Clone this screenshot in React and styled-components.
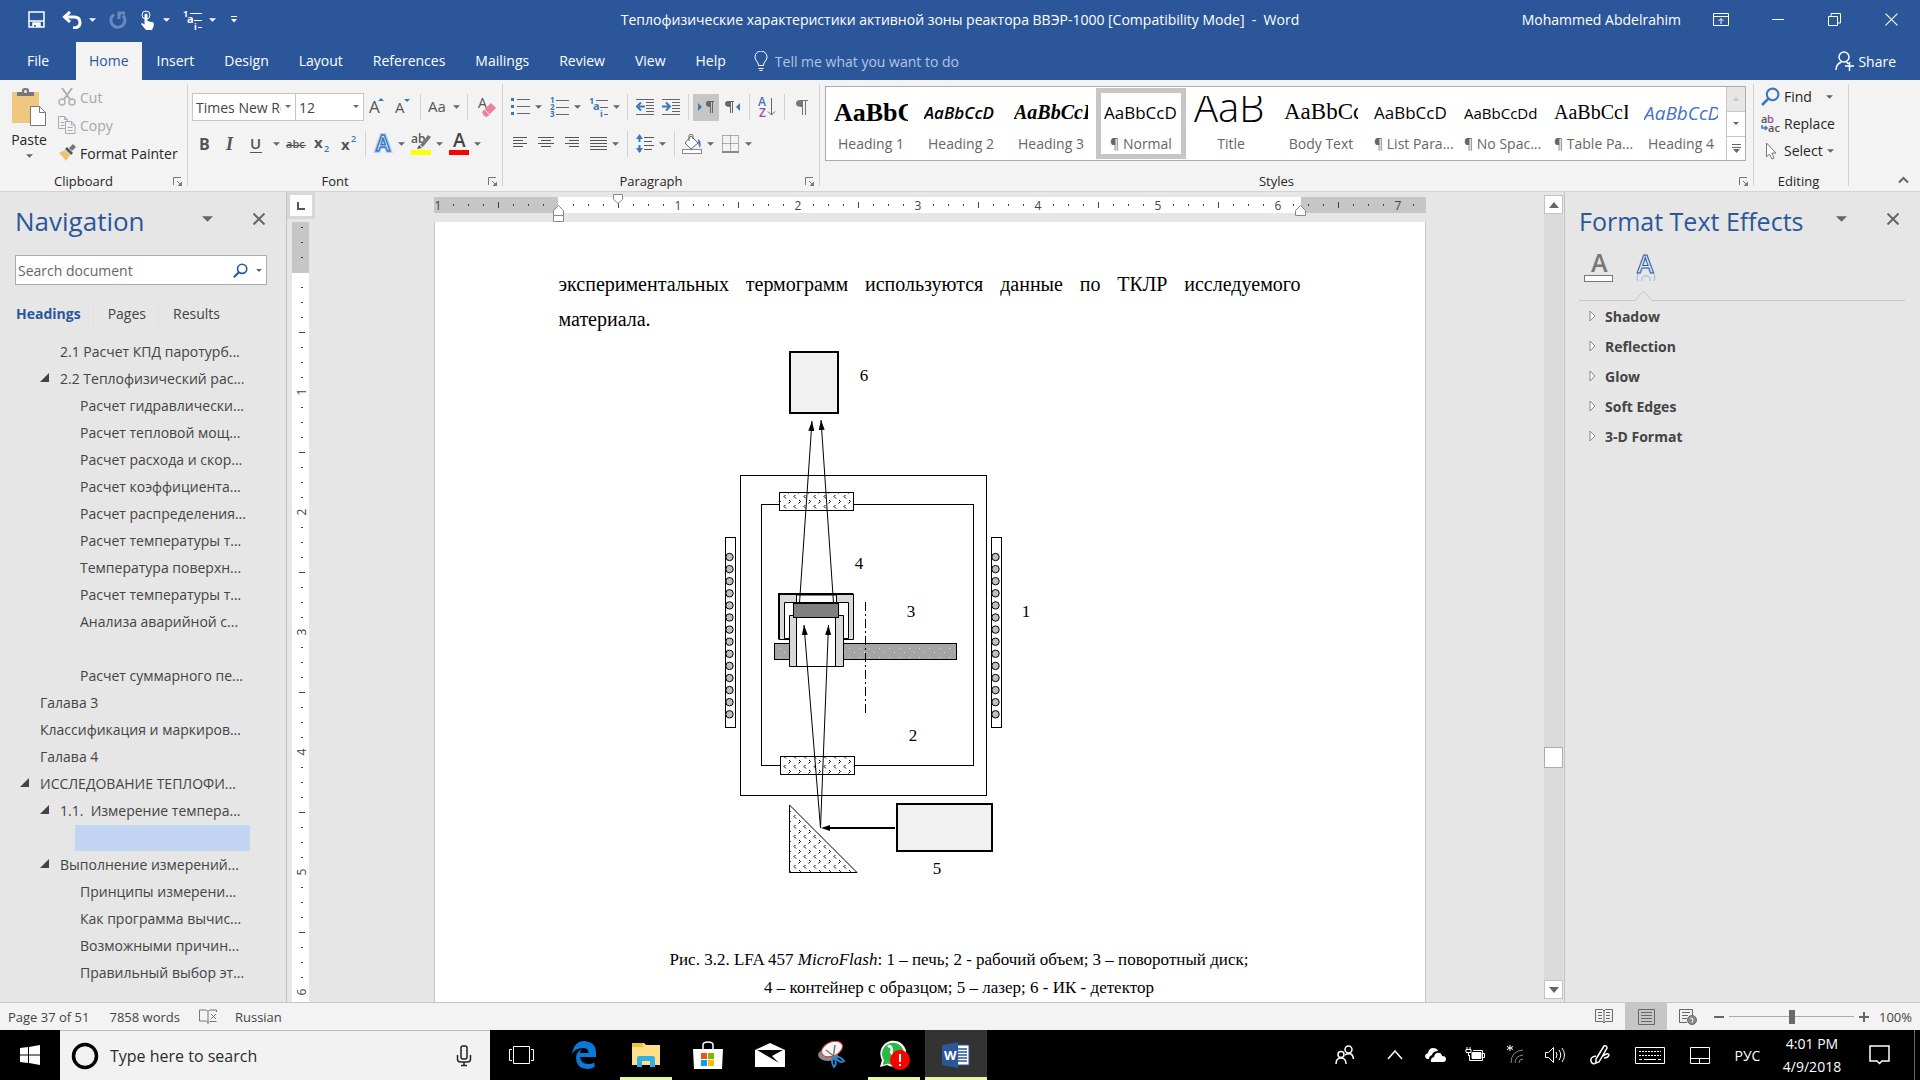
import React from 'react';
import styled, { createGlobalStyle, css } from 'styled-components';

const GlobalStyle = createGlobalStyle`
  * { box-sizing: border-box; }
  body {
    margin: 0;
    overflow: hidden;
    font-family: "Open Sans", "Noto Sans", sans-serif;
    font-size: 14px;
    color: #262626;
  }
  button, input, select { font: inherit; color: inherit; }
  button { border: none; background: none; padding: 0; cursor: pointer; }
  svg { display: block; flex: none; }
`;

const Window = styled.div`
  display: flex;
  flex-direction: column;
  height: 100vh;
  background: #e6e6e6;
`;

/* title bar and tabs */

const TitleBar = styled.header`
  display: grid;
  grid-template-columns: 1fr auto 1fr;
  align-items: center;
  height: 42px;
  flex: none;
  padding-bottom: 3px;
  background: #2b579a;
  color: #fff;
`;

const QuickAccess = styled.div`
  display: flex;
  align-items: center;
  padding-left: 23px;
`;

const QuickButton = styled.button`
  display: flex;
  align-items: center;
  justify-content: center;
  gap: 7px;
  width: ${p => p.$w}px;
  height: 32px;
  opacity: ${p => (p.$dim ? 0.3 : 1)};
`;

const TitleText = styled.div`
  white-space: pre;
`;

const WindowControls = styled.div`
  display: flex;
  align-items: center;
  justify-content: flex-end;
`;

const UserName = styled.span`
  padding-right: 11px;
`;

const WindowButton = styled.button`
  display: flex;
  align-items: center;
  justify-content: center;
  width: 57px;
  height: 38px;
`;

const TabBar = styled.nav`
  display: flex;
  align-items: stretch;
  height: 38px;
  flex: none;
  background: #2b579a;
  color: #fff;
`;

const Tab = styled.button`
  padding: 0 15px 2px;
  ${p => p.$file && css`width: 76px;`}
  ${p => p.$active && css`
    padding: 0 13px 2px;
    background: #f3f3f3;
    color: #2b579a;
  `}
`;

const TellMe = styled.label`
  display: flex;
  align-items: center;
  gap: 6px;
  padding-left: 12px;
  flex: 1;
`;

const TellInput = styled.input`
  width: 240px;
  border: none;
  padding: 0;
  outline: none;
  background: none;
  &::placeholder { color: #b4c5e0; opacity: 1; }
`;

const ShareButton = styled.button`
  display: flex;
  align-items: center;
  gap: 4px;
  padding-right: 24px;
`;

/* ribbon */

const Ribbon = styled.section`
  display: flex;
  height: 112px;
  flex: none;
  background: #f3f3f3;
  border-bottom: 1px solid #d2d2d2;
`;

const Group = styled.div`
  display: flex;
  flex-direction: column;
  width: ${p => (p.$w ? p.$w + 'px' : 'auto')};
  flex: ${p => (p.$w ? 'none' : '1')};
  min-width: 0;
`;

const GroupBody = styled.div`
  display: flex;
  flex: 1;
  padding: ${p => p.$pad};
  flex-direction: ${p => (p.$rows ? 'column' : 'row')};
  gap: ${p => p.$gap || 0}px;
`;

const GroupFooter = styled.div`
  display: flex;
  align-items: center;
  height: 20px;
  padding: 0 5px 0 0;
  font-size: 13px;
`;

const Launcher = styled.button`
  padding-left: 6px;
`;

const GroupTitle = styled.span`
  flex: 1;
  text-align: center;
`;

const Divider = styled.div`
  width: 1px;
  flex: none;
  margin: 4px 0 5px;
  background: #d2d2d2;
`;

const ToolRow = styled.div`
  display: flex;
  align-items: center;
  height: 28px;
`;

const Tool = styled.button`
  display: flex;
  align-items: center;
  justify-content: center;
  gap: 5px;
  width: ${p => p.$w || 26}px;
  height: 27px;
  flex: none;
  background: ${p => (p.$on ? '#c6c6c6' : 'transparent')};
`;

const Sep = styled.div`
  width: 1px;
  height: 26px;
  margin: 0 4px;
  background: #d2d2d2;
`;

const PasteButton = styled.button`
  display: flex;
  flex-direction: column;
  align-items: center;
  gap: 4px;
  width: 50px;
  padding-top: 5px;
  line-height: 20px;
`;

const Stack = styled.div`
  display: flex;
  flex-direction: column;
  gap: ${p => p.$gap || 0}px;
`;

const Command = styled.button`
  display: flex;
  align-items: center;
  gap: 4px;
  height: ${p => p.$h || 28}px;
  color: ${p => (p.$dim ? '#a6a6a6' : '#262626')};
  white-space: nowrap;
`;

const CommandGap = styled.span`
  width: 6px;
`;

const SelectBox = styled.div`
  position: relative;
  width: ${p => p.$w}px;
  height: 28px;
  border: 1px solid #c6c6c6;
  background: #fff;
  & + & { border-left: none; }
`;

const Select = styled.select`
  appearance: none;
  width: ${p => p.$w}px;
  height: 26px;
  border: none;
  padding: 0 0 0 3px;
  outline: none;
  background: transparent;
  color: #444;
  overflow: hidden;
  text-overflow: clip;
`;

const SelectArrow = styled.span`
  position: absolute;
  right: 4px;
  top: 11px;
  pointer-events: none;
`;

const Gallery = styled.div`
  display: flex;
  flex: 1;
  height: 75px;
  border: 1px solid #ababab;
  background: #fff;
`;

const StyleList = styled.div`
  display: grid;
  grid-template-columns: repeat(10, 1fr);
  flex: 1;
  padding: 1px 0;
`;

const StyleItem = styled.button`
  display: flex;
  flex-direction: column;
  justify-content: space-between;
  min-width: 0;
  padding: 3px 3px 1px;
  border: 5px solid ${p => (p.$on ? '#c6c6c6' : 'transparent')};
`;

const Preview = styled.span`
  display: block;
  width: 100%;
  height: 30px;
  overflow: hidden;
  white-space: nowrap;
  text-align: left;
  color: #000;
  ${p => p.$look}
`;

const StyleName = styled.span`
  width: 100%;
  line-height: 18px;
  white-space: nowrap;
  text-align: center;
  font-size: 14px;
  color: #666;
`;

const GalleryScroll = styled.div`
  display: grid;
  grid-template-rows: 1fr 1fr 1fr;
  width: 19px;
  border-left: 1px solid #c6c6c6;
`;

const GalleryButton = styled.button`
  display: flex;
  align-items: center;
  justify-content: center;
  background: ${p => (p.$off ? '#e6e6e6' : '#fff')};
  & + & { border-top: 1px solid #c6c6c6; }
`;

const RibbonEnd = styled.div`
  display: flex;
  flex: none;
  width: 71px;
  align-items: flex-end;
  justify-content: flex-end;
  padding: 0 11px 7px 0;
`;

/* work area */

const Workspace = styled.main`
  display: flex;
  flex: 1;
  min-height: 0;
`;

const Pane = styled.aside`
  display: flex;
  flex-direction: column;
  flex: none;
  width: ${p => p.$w}px;
  padding: ${p => p.$pad};
  color: #444;
`;

const PaneHead = styled.div`
  display: flex;
  align-items: center;
  height: 36px;
`;

const PaneTitle = styled.h2`
  flex: 1;
  margin: 0;
  font-size: ${p => p.$size || 26}px;
  font-weight: 400;
  line-height: 36px;
  color: #2b579a;
  white-space: nowrap;
`;

const PaneButton = styled.button`
  display: flex;
  align-items: center;
  justify-content: center;
  width: 24px;
  height: 24px;
  margin-bottom: 4px;
  margin-left: ${p => p.$ml || 0}px;
`;

const SearchBox = styled.div`
  display: flex;
  align-items: center;
  gap: 8px;
  height: 30px;
  margin: 16px 4px 0 0;
  padding-right: 4px;
  border: 1px solid #ababab;
  background: #fff;
`;

const SearchInput = styled.input`
  flex: 1;
  min-width: 0;
  border: none;
  outline: none;
  padding: 0 2px;
  background: none;
  &::placeholder { color: #666; opacity: 1; }
`;

const NavTabs = styled.div`
  display: flex;
  align-items: center;
  height: 24px;
  margin-top: 16px;
  padding-left: 1px;
`;

const NavTab = styled.button`
  height: 24px;
  padding-right: 12px;
  font-weight: ${p => (p.$on ? 700 : 400)};
  color: ${p => (p.$on ? '#2b579a' : '#444')};
  & + & {
    padding-left: 14px;
    border-left: 1px solid #dedede;
  }
`;

const Tree = styled.ul`
  list-style: none;
  margin: 13px 0 0;
  padding: 0;
`;

const TreeItem = styled.li`
  display: flex;
  align-items: center;
  height: 27px;
  padding-left: ${p => p.$level * 20 - 15}px;
`;

const Twisty = styled.span`
  display: flex;
  width: 20px;
  flex: none;
  padding: 0 0 2px;
`;

const TreeLink = styled.button`
  white-space: pre;
  text-align: left;
  ${p => p.$on && css`
    width: 175px;
    height: 26px;
    margin-left: -5px;
    background: #c2d5f2;
  `}
`;

const Canvas = styled.section`
  display: grid;
  grid-template-columns: 28px 1fr 20px;
  grid-template-rows: 30px 1fr;
  flex: 1;
  min-width: 0;
  border-left: 1px solid #c1c1c1;
  border-right: 1px solid #c1c1c1;
`;

const TabSelector = styled.button`
  display: flex;
  align-items: center;
  justify-content: center;
  width: 28px;
  height: 27px;
  border: 3px solid #d8d8d8;
  background: #fdfdfd;
`;

const RulerRow = styled.div`
  display: flex;
  justify-content: center;
`;

const SideRuler = styled.div`
  grid-row: 2;
  overflow: hidden;
  padding-left: 5px;
  min-height: 0;
`;

const PageScroll = styled.div`
  display: flex;
  justify-content: center;
  grid-row: 2;
  grid-column: 2;
  min-height: 0;
  overflow: hidden;
`;

const Page = styled.article`
  width: 992px;
  min-height: 100%;
  padding: 45px 124px 0;
  background: #fff;
  border: 1px solid #c6c6c6;
  border-top: none;
  border-bottom: none;
  font-family: "Liberation Serif", serif;
  color: #000;
`;

const Paragraph = styled.p`
  margin: 0;
  font-size: 20px;
  line-height: 35px;
  text-align: justify;
`;

const Figure = styled.figure`
  margin: 0;
`;

const Scheme = styled.svg`
  margin-left: 161px;
`;

const Caption = styled.figcaption`
  padding-left: 59px;
  text-align: center;
  font-size: 17px;
  line-height: 28px;
`;

const ScrollBar = styled.div`
  display: flex;
  flex-direction: column;
  grid-column: 3;
  grid-row: 1 / 3;
  width: 19px;
  margin: 3px 0;
  background: #dadada;
`;

const ScrollButton = styled.button`
  display: flex;
  align-items: center;
  justify-content: center;
  height: 19px;
  flex: none;
  border: 1px solid #c1c1c1;
  background: #fff;
`;

const ScrollTrack = styled.div`
  display: grid;
  grid-template-rows: 534fr 21px 213fr;
  flex: 1;
`;

const ScrollThumb = styled.div`
  grid-row: 2;
  border: 1px solid #ababab;
  background: #fff;
`;

const EffectTabs = styled.div`
  display: flex;
  align-items: flex-start;
  gap: 21px;
  height: 36px;
  margin-top: 14px;
  padding-left: 5px;
`;

const EffectRule = styled.div`
  display: flex;
  align-items: flex-end;
  height: 12px;
  &::before { content: ''; width: 56px; height: 1px; background: #c6c6c6; }
  &::after { content: ''; flex: 1; height: 1px; background: #c6c6c6; }
`;

const Section = styled.button`
  display: flex;
  align-items: center;
  gap: 9px;
  height: 30px;
  padding-left: 10px;
  font-weight: 700;
  color: #444;
`;

/* status bar */

const StatusBar = styled.footer`
  display: flex;
  align-items: center;
  height: 28px;
  flex: none;
  padding: 0 8px;
  background: #f3f3f3;
  border-top: 1px solid #c6c6c6;
  font-size: 13px;
  color: #444;
`;

const StatusItem = styled.button`
  margin-right: ${p => p.$mr || 0}px;
`;

const Spacer = styled.div`
  flex: 1;
`;

const ViewButton = styled.button`
  display: flex;
  align-items: center;
  justify-content: center;
  width: 42px;
  height: 27px;
  background: ${p => (p.$on ? '#c6c6c6' : 'transparent')};
`;

const ZoomRange = styled.input`
  appearance: none;
  width: 125px;
  height: 14px;
  margin: 0 5px;
  background: linear-gradient(#ababab, #ababab) center / 100% 1px no-repeat;
  &::-webkit-slider-thumb {
    appearance: none;
    width: 6px;
    height: 14px;
    background: #6a6a6a;
  }
`;

const ZoomValue = styled.span`
  width: 43px;
  text-align: right;
`;

/* taskbar */

const TaskBar = styled.footer`
  display: flex;
  height: 50px;
  flex: none;
  background: #000;
  color: #fff;
`;

const TaskButton = styled.button`
  display: flex;
  align-items: center;
  justify-content: center;
  width: ${p => p.$w || 62}px;
  background: ${p => (p.$on ? '#333' : 'transparent')};
  border-bottom: 3px solid ${p => (p.$open ? '#e3f9a6' : 'transparent')};
  border-top: 3px solid transparent;
  ${p => p.$open && !p.$on && css`
    width: 52px;
    margin: 0 5px;
  `}
`;

const TaskSearch = styled.label`
  display: flex;
  align-items: center;
  width: 430px;
  padding: 0 18px 0 11px;
  gap: 11px;
  background: #f2f2f2;
  border-top: 1px solid #bbb;
`;

const TaskInput = styled.input`
  flex: 1;
  border: none;
  outline: none;
  padding: 0;
  background: none;
  font-size: 16px;
  &::placeholder { color: #2b2b2b; opacity: 1; }
`;

const Tray = styled.div`
  display: flex;
  flex: 1;
  justify-content: flex-end;
`;

const TrayButton = styled.button`
  display: flex;
  align-items: center;
  justify-content: center;
  width: ${p => p.$w || 40}px;
  color: #fff;
`;

const Clock = styled.button`
  width: 84px;
  line-height: 23px;
  color: #fff;
`;

const ShowDesktop = styled.button`
  width: 6px;
  margin-left: 10px;
  border-left: 1px solid #666;
`;

/* icons */

const Caret = ({ color = '#666', w = 7 }) => (
  <svg width={w} height={Math.ceil(w / 2)} viewBox="0 0 8 4"><path d="M0 0h8L4 4z" fill={color} /></svg>
);

const Glyph = ({ w = 20, h = 20, children, ...rest }) => (
  <svg width={w} height={h} viewBox={`0 0 ${w} ${h}`} fill="none" {...rest}>{children}</svg>
);

const GlyphText = ({ x, y, size, color = '#555', children, ...rest }) => (
  <text x={x} y={y} fontSize={size} fill={color} fontFamily="Open Sans, sans-serif" {...rest}>{children}</text>
);

const MultiLevel = ({ accent = '#3b78b8', line = '#666' }) => (
  <Glyph w={19} h={20}>
    <path d="M7 3.500h12M11 10.500h8M15 17.500h4" stroke={line} />
    <GlyphText x={0} y={7} size={9} color={accent} fontWeight="700">1</GlyphText>
    <GlyphText x={4} y={13} size={11} color={accent} fontWeight="700">a</GlyphText>
    <GlyphText x={11} y={20} size={9} color={accent} fontWeight="700">i</GlyphText>
  </Glyph>
);

const Lines = ({ rows, w = 17 }) => (
  <Glyph w={w} h={14}>
    <path d={rows.map(([x1, x2], i) => `M${x1} ${i * 3 + 0.5}H${x2}`).join('')} stroke="#555" />
  </Glyph>
);

const LauncherIcon = () => (
  <Glyph w={9} h={9}>
    <path d="M.5 8V.5H8M4 4l3.500 3.500" stroke="#777" />
    <path d="M9 4.500V9H4.500z" fill="#777" />
  </Glyph>
);

const Magnifier = ({ size = 18, color = '#3b78b8' }) => (
  <svg width={size} height={size} viewBox="0 0 18 18" fill="none" stroke={color}>
    <circle cx="11" cy="7" r="5.500" strokeWidth="2" />
    <path d="M7 11l-6 6" strokeWidth="2.500" />
  </svg>
);

const PasteIcon = () => (
  <Glyph w={36} h={38}>
    <rect x="1" y="4" width="27" height="31" fill="#edc87e" />
    <path d="M6 8V4h5V2q0-2 3.500-2T18 2v2h5v4z" fill="#777" />
    <circle cx="14.500" cy="3.500" r="1.500" fill="#f3f3f3" />
    <path d="M19.500 18.500h9l6 6v13h-15z" fill="#fff" stroke="#777" />
    <path d="M28.500 18.500v6h6" stroke="#777" />
  </Glyph>
);

const CutIcon = () => (
  <Glyph w={18} h={18} stroke="#b1b1b1" strokeWidth="1.500">
    <path d="M4 0l8.500 12M14 0L5.500 12" strokeWidth="2" />
    <circle cx="4" cy="14" r="3" /><circle cx="14" cy="14" r="3" />
  </Glyph>
);

const CopyIcon = () => (
  <Glyph w={18} h={18} stroke="#b1a6b6">
    <path d="M.5 .5h6l3 3v9h-9zM6.500 .5v3h3M2.500 6.500h4M2.500 9.500h4" fill="#f3f3f3" />
    <path d="M7.500 5.500h6l3.500 3.500v8.500H7.500zM13.500 5.500v3.500h3.500M9.500 11.500h5M9.500 14.500h5" fill="#f3f3f3" />
  </Glyph>
);

const PainterIcon = () => (
  <Glyph w={18} h={18}>
    <path d="M1 9l6-3 5 5-4 6q-2-3-7-8z" fill="#edc07a" />
    <path d="M7 5l2-2 6 6-2 2z" fill="#555" />
    <path d="M11 4l4-4 3 3-4 4z" fill="#777" />
  </Glyph>
);

const EraserIcon = () => (
  <Glyph w={20} h={22}>
    <GlyphText x={1} y={12} size={14}>A</GlyphText>
    <path d="M5 16l9-9 5 5-9 9-3-1z" fill="#e8829a" />
    <path d="M7 13l5 5" stroke="#f3f3f3" />
  </Glyph>
);

const TextEffectIcon = ({ size = 20 }) => (
  <svg width={size} height={size + 2} viewBox="0 0 20 22">
    <GlyphText x={3} y={18} size={21} color="#fff" stroke="#b9d4f0" strokeWidth="4" fontWeight="600">A</GlyphText>
    <GlyphText x={3} y={18} size={21} color="#fff" stroke="#3b78c4" strokeWidth="1.500" fontWeight="600">A</GlyphText>
  </svg>
);

const HighlightIcon = () => (
  <Glyph w={20} h={22}>
    <GlyphText x={0} y={10} size={12} fontWeight="600">ab</GlyphText>
    <path d="M17 2l3 2-8 10-3-2z" fill="#777" />
    <path d="M8 12l3 3-5 1z" fill="#555" />
    <path d="M0 17h20v5H0z" fill="#ff0" />
  </Glyph>
);

const FontColorIcon = () => (
  <Glyph w={20} h={22}>
    <GlyphText x={4} y={14} size={19} color="#444" fontWeight="600">A</GlyphText>
    <path d="M0 17h20v5H0z" fill="#f00" />
  </Glyph>
);

const BulletsIcon = () => (
  <Glyph w={19} h={18}>
    <path d="M0 0h3v3H0zM0 7h3v3H0zM0 14h3v3H0z" fill="#3b78b8" />
    <path d="M6 1.500h13M6 8.500h13M6 15.500h13" stroke="#666" />
  </Glyph>
);

const NumberingIcon = () => (
  <Glyph w={19} h={20}>
    <path d="M6 3.500h13M6 10.500h13M6 17.500h13" stroke="#666" />
    {['1', '2', '3'].map((n, i) => (
      <GlyphText key={n} x={0} y={i * 7 + 6} size={8} color="#3b78b8" fontWeight="700">{n}</GlyphText>
    ))}
  </Glyph>
);

const IndentIcon = ({ out }) => (
  <Glyph w={18} h={17}>
    <path d="M0 .5h18M10 3.500h8M10 6.500h8M10 9.500h8M10 12.500h8M0 15.500h18" stroke="#666" />
    {out
      ? <path d="M9 7.500H3M5 3.500L1 7.500l4 4" stroke="#3b78b8" strokeWidth="2" />
      : <path d="M0 7.500h7M4 3.500l4 4-4 4" stroke="#3b78b8" strokeWidth="2" />}
  </Glyph>
);

const DirectionIcon = ({ rtl }) => (
  <Glyph w={16} h={12}>
    {rtl ? (
      <>
        <path d="M4 0h6v1H9v11H8V1H7v11H6V6Q1 6 1 3t3-3z" fill="#666" />
        <path d="M16 2v8l-4-4z" fill="#3b78b8" />
      </>
    ) : (
      <>
        <path d="M10 0h6v1h-1v11h-1V1h-1v11h-1V6q-4 0-4-3t2-3z" fill="#666" />
        <path d="M0 2v8l4-4z" fill="#3b78b8" />
      </>
    )}
  </Glyph>
);

const SortIcon = () => (
  <Glyph w={18} h={20}>
    <GlyphText x={0} y={9} size={12} color="#3b78b8" fontWeight="600">A</GlyphText>
    <GlyphText x={1} y={20} size={12} color="#8e4fae" fontWeight="600">Z</GlyphText>
    <path d="M13.500 1v17M10 14.500l3.500 3.500 3.500-3.500" stroke="#666" />
  </Glyph>
);

const PilcrowIcon = () => (
  <Glyph w={12} h={15}>
    <path d="M4 0h8v1h-2v14H9V1H7v14H6V7Q0 7 0 3.500T4 0z" fill="#777" />
  </Glyph>
);

const SpacingIcon = () => (
  <Glyph w={18} h={20}>
    <path d="M3.500 2v6M3.500 11v7" stroke="#3b78c4" strokeWidth="2" />
    <path d="M0 5l3.500-5L7 5zM0 14l3.500 5L7 14z" fill="#3b78c4" />
    <path d="M8 3.500h10M8 7.500h8M8 11.500h10M8 15.500h8" stroke="#555" />
  </Glyph>
);

const ShadingIcon = () => (
  <Glyph w={20} h={20}>
    <path d="M16 5q4 2 2 9-2-3-2-9z" fill="#3b78b8" />
    <path d="M9 2l7 7-7 6-6-6z" fill="#fff" stroke="#666" />
    <path d="M7 7V1.500q0-1 2-1t2 1V5" stroke="#666" />
    <rect x=".5" y="15.500" width="19" height="4" fill="#fff" stroke="#888" />
  </Glyph>
);

const BordersIcon = () => (
  <Glyph w={18} h={18} stroke="#666">
    <path d="M.5 .5h16v16M.5 .5v16M8.500 .5v16M.5 8.500h16" strokeDasharray="1 1" />
    <path d="M0 17h17" strokeWidth="1.500" />
  </Glyph>
);

const ReplaceIcon = () => (
  <Glyph w={19} h={20}>
    <GlyphText x={0} y={9} size={11} fontWeight="600">a</GlyphText>
    <GlyphText x={6} y={9} size={11} color="#8e4fae" fontWeight="600">b</GlyphText>
    <GlyphText x={7} y={18} size={11} fontWeight="600">ac</GlyphText>
    <path d="M1 11v3h5M4 12l2 2-2 2" stroke="#3b78b8" strokeWidth="1.500" />
  </Glyph>
);

const SelectIcon = () => (
  <Glyph w={19} h={18}>
    <path d="M5.500 1v14l3-3 2.500 5 2-1-2-5h4z" fill="#fff" stroke="#777" />
  </Glyph>
);

const CloseIcon = ({ color = '#666', size = 12, sw = 2 }) => (
  <svg width={size} height={size} viewBox="0 0 12 12"><path d="M.5 .5l11 11M11.500 .5l-11 11" stroke={color} strokeWidth={sw} /></svg>
);

/* rulers: one inch is 120 units, with a mark every 15 */

const rulerMarks = (from, to) => {
  const list = [];
  for (let k = Math.ceil(from / 15); k * 15 <= to; k += 1) list.push(k);
  return list;
};

const HorizontalRuler = () => (
  <svg width="992" height="30" viewBox="-124 0 992 30">
    <path d="M-124 5h124v16h-124zM743 5h125v16H743z" fill="#c6c6c6" />
    <path d="M0 5h743v16H0z" fill="#fff" />
    {rulerMarks(-121, 862).filter(k => k !== 0).map(k => {
      if (k % 8 === 0) {
        return <GlyphText key={k} x={k * 15} y={18} size={12} color="#444" textAnchor="middle">{Math.abs(k / 8)}</GlyphText>;
      }
      const half = k % 4 === 0;
      return <path key={k} d={half ? `M${k * 15 + 0.5} 10v6` : `M${k * 15 + 0.5} 12v2`} stroke="#444" />;
    })}
    <path d="M55.500 2.500h9v5l-4.500 4-4.500-4z" fill="#fff" stroke="#888" />
    <path d="M-4.500 23.500v-5l5-5 5 5v5zM-4.500 23.500h10v6h-10z" fill="#fff" stroke="#888" />
    <path d="M737.500 23.500v-5l5-5 5 5v5z" fill="#fff" stroke="#888" />
  </svg>
);

const VerticalRuler = () => (
  <svg width="17" height="1200" viewBox="0 -50 17 1200">
    <path d="M0-50h17V1H0z" fill="#c6c6c6" />
    <path d="M0 1h17v1150H0z" fill="#fff" />
    {rulerMarks(-46, 1140).filter(k => k !== 0).map(k => {
      if (k % 8 === 0) {
        return (
          <GlyphText key={k} x={0} y={0} size={12} color="#444" textAnchor="middle" transform={`translate(14 ${k * 15}) rotate(-90)`}>
            {k / 8}
          </GlyphText>
        );
      }
      const half = k % 4 === 0;
      return <path key={k} d={half ? `M7 ${k * 15 + 0.5}h6` : `M9 ${k * 15 + 0.5}h2`} stroke="#444" />;
    })}
  </svg>
);

const coils = Array.from({ length: 14 }, (_, i) => 557 + i * 12.1);

const Apparatus = () => (
  <Scheme width="350" height="609" viewBox="720 337 350 609" fill="none" stroke="#000">
    <defs>
      <pattern id="glass" width="10" height="10" x="782" y="494" patternUnits="userSpaceOnUse">
        <path d="M3.500 1l-1.500 1.500 2 2M7 6l1.500 1.500-2 2" fill="none" stroke="#000" strokeWidth="1" />
      </pattern>
      <pattern id="speckle" width="10" height="9" x="778" y="646" patternUnits="userSpaceOnUse">
        <path d="M1 2h1v1H1zM6 6h1v1H6z" fill="#d9d9d9" stroke="none" />
      </pattern>
      <marker id="tip" viewBox="0 0 10 6" refX="10" refY="3" markerWidth="10" markerHeight="6" markerUnits="userSpaceOnUse" orient="auto">
        <path d="M0 0l10 3-10 3z" fill="#000" stroke="none" />
      </marker>
    </defs>
    <rect x="790" y="352" width="48" height="61" fill="#f1f1f1" strokeWidth="2" />
    <rect x="740.500" y="475.500" width="246" height="320" />
    <rect x="761.500" y="504.500" width="212" height="261" />
    <rect x="779.500" y="492.500" width="74" height="18" fill="#fff" />
    <rect x="779.500" y="492.500" width="74" height="18" fill="url(#glass)" />
    <rect x="780.500" y="756.500" width="74" height="18" fill="#fff" />
    <rect x="780.500" y="756.500" width="74" height="18" fill="url(#glass)" />
    <rect x="725.500" y="537.500" width="10" height="190" />
    <rect x="991.500" y="537.500" width="10" height="190" />
    {coils.map(y => (
      <g key={y} fill="#bfbfbf">
        <circle cx="729.500" cy={y} r="3.700" />
        <circle cx="995.500" cy={y} r="3.700" />
      </g>
    ))}
    <rect x="774.500" y="643.500" width="182" height="16" fill="#a5a5a5" />
    <rect x="774.500" y="643.500" width="182" height="16" fill="url(#speckle)" />
    <path d="M779.500 594h74v45.500h-74z" fill="#d9d9d9" />
    <path d="M853 594h-74v45.500" strokeWidth="2" />
    <path d="M784.500 602.500h64v36h-64z" fill="#fff" />
    <path d="M796.500 595h40v7.500h-40z" fill="#fff" />
    <path d="M789.500 615.500h54v51h-54z" fill="#d9d9d9" />
    <path d="M796.500 615.500h39v51h-39z" fill="#fff" />
    <rect x="793.500" y="603.500" width="45" height="14" fill="#808080" />
    <path d="M865.500 602v111" strokeDasharray="9 3 2 3" />
    <path d="M799.500 603L812 421" markerEnd="url(#tip)" />
    <path d="M833.500 603L821 420" markerEnd="url(#tip)" />
    <path d="M820.500 828L804 625" markerEnd="url(#tip)" />
    <path d="M820.500 828l8-203" markerEnd="url(#tip)" />
    <path d="M789.500 805v67.500h67.500z" fill="url(#glass)" />
    <path d="M895 828H828" strokeWidth="2" />
    <path d="M821 828l9-3v6z" fill="#000" stroke="none" />
    <rect x="897" y="804" width="95" height="47" fill="#f1f1f1" strokeWidth="2" />
    <g fill="#000" stroke="none" fontFamily="Liberation Serif, serif" fontSize="17" textAnchor="middle">
      <text x="864" y="381">6</text>
      <text x="859" y="569">4</text>
      <text x="911" y="617">3</text>
      <text x="1026" y="617">1</text>
      <text x="913" y="741">2</text>
      <text x="937" y="874">5</text>
    </g>
  </Scheme>
);

const sans = '"Open Sans", sans-serif';
const serif = '"Liberation Serif", serif';

const styleItems = [
  { name: 'Heading 1', sample: 'AaBbCc', look: css`font: 700 26px/34px ${serif};` },
  { name: 'Heading 2', sample: 'AaBbCcD', look: css`font: italic 600 17px/34px ${sans};` },
  { name: 'Heading 3', sample: 'AaBbCcI', look: css`font: italic 700 20px/32px ${serif};` },
  { name: '¶ Normal', sample: 'AaBbCcD', look: css`font: 400 17px/34px ${sans};`, on: true },
  { name: 'Title', sample: 'AaB', look: css`font: 300 40px/22px ${sans};` },
  { name: 'Body Text', sample: 'AaBbCc', look: css`font: 400 23px/32px ${serif};` },
  { name: '¶ List Para...', sample: 'AaBbCcD', look: css`font: 400 17px/34px ${sans};` },
  { name: '¶ No Spac...', sample: 'AaBbCcDd', look: css`font: 400 15px/34px ${sans};` },
  { name: '¶ Table Pa...', sample: 'AaBbCcI', look: css`font: 400 20px/32px ${serif};` },
  { name: 'Heading 4', sample: 'AaBbCcD', look: css`font: italic 400 19px/34px ${sans}; color: #4472c4;` },
];

const headings = [
  { level: 2, text: '2.1 Расчет КПД паротурб...' },
  { level: 2, text: '2.2 Теплофизический рас...', open: true },
  { level: 3, text: 'Расчет гидравлически...' },
  { level: 3, text: 'Расчет тепловой мощ...' },
  { level: 3, text: 'Расчет расхода и скор...' },
  { level: 3, text: 'Расчет коэффициента...' },
  { level: 3, text: 'Расчет распределения...' },
  { level: 3, text: 'Расчет температуры т...' },
  { level: 3, text: 'Температура поверхн...' },
  { level: 3, text: 'Расчет температуры т...' },
  { level: 3, text: 'Анализа аварийной с...' },
  { level: 3, text: '' },
  { level: 3, text: 'Расчет суммарного пе...' },
  { level: 1, text: 'Галава 3' },
  { level: 1, text: 'Классификация и маркиров...' },
  { level: 1, text: 'Галава 4' },
  { level: 1, text: 'ИССЛЕДОВАНИЕ ТЕПЛОФИ...', open: true },
  { level: 2, text: '1.1.  Измерение темпера...', open: true },
  { level: 3, text: '', on: true },
  { level: 2, text: 'Выполнение измерений...', open: true },
  { level: 3, text: 'Принципы измерени...' },
  { level: 3, text: 'Как программа вычис...' },
  { level: 3, text: 'Возможными причин...' },
  { level: 3, text: 'Правильный выбор эт...' },
];

const RibbonGroup = ({ title, w, launcher, children }) => (
  <>
    <Group $w={w}>
      {children}
      <GroupFooter>
        <GroupTitle>{title}</GroupTitle>
        {launcher && <Launcher aria-label={`${title} settings`}><LauncherIcon /></Launcher>}
      </GroupFooter>
    </Group>
    <Divider />
  </>
);

const Header = () => (
  <>
    <TitleBar>
      <QuickAccess>
        <QuickButton $w={26} aria-label="Save">
          <Glyph w={17} h={17} stroke="#fff" strokeWidth="1.500">
            <path d="M1 1h15v15H1z" /><path d="M1 10h15" /><path d="M5 16v-4h7v4" fill="#fff" /><path d="M7 14v2" stroke="#2b579a" />
          </Glyph>
        </QuickButton>
        <QuickButton $w={59} aria-label="Undo">
          <Glyph w={20} h={18} stroke="#fff" strokeWidth="3">
            <path d="M2 6h10q6 0 6 5.500T11 17" /><path d="M8 1L2.500 6 8 11" />
          </Glyph>
          <Caret color="#fff" />
        </QuickButton>
        <QuickButton $w={20} $dim aria-label="Redo">
          <Glyph w={18} h={18} stroke="#fff" strokeWidth="3">
            <path d="M5 3.500a7 7 0 1 0 9 1M9 2h7M10 1v7" />
          </Glyph>
        </QuickButton>
        <QuickButton $w={54} aria-label="Touch mode">
          <Glyph w={16} h={20}>
            <circle cx="6" cy="5" r="4" stroke="#fff" />
            <path d="M4.500 5q0-1.500 1.500-1.500T7.500 5v6l6 1.500q1 1 0 4L12 20H6l-5-6 1-1 2.500 1.500z" fill="#fff" />
          </Glyph>
          <Caret color="#fff" />
        </QuickButton>
        <QuickButton $w={34} aria-label="Multilevel list">
          <MultiLevel accent="#fff" line="#fff" />
          <Caret color="#fff" />
        </QuickButton>
        <QuickButton $w={36} aria-label="Customize Quick Access Toolbar">
          <Glyph w={7} h={8}><path d="M0 .5h6" stroke="#fff" /><path d="M0 3h6L3 6.500z" fill="#fff" /></Glyph>
        </QuickButton>
      </QuickAccess>
      <TitleText>Теплофизические характеристики активной зоны реактора ВВЭР-1000 [Compatibility Mode]  -  Word</TitleText>
      <WindowControls>
        <UserName>Mohammed Abdelrahim</UserName>
        <WindowButton aria-label="Ribbon display options">
          <Glyph w={16} h={13} stroke="#fff"><path d="M.5 .5h15v12H.5zM.5 3.500h15M8 11V6M5.500 8L8 5.500 10.500 8" /></Glyph>
        </WindowButton>
        <WindowButton aria-label="Minimize"><Glyph w={12} h={2}><path d="M0 .5h12" stroke="#fff" /></Glyph></WindowButton>
        <WindowButton aria-label="Restore">
          <Glyph w={13} h={13} stroke="#fff"><path d="M.5 3.500h9v9h-9zM3 3V.5h9.500V10H10" /></Glyph>
        </WindowButton>
        <WindowButton aria-label="Close"><CloseIcon color="#fff" sw={1} size={13} /></WindowButton>
      </WindowControls>
    </TitleBar>
    <TabBar>
      <Tab $file>File</Tab>
      <Tab $active>Home</Tab>
      {['Insert', 'Design', 'Layout', 'References', 'Mailings', 'Review', 'View', 'Help'].map(t => <Tab key={t}>{t}</Tab>)}
      <TellMe>
        <Glyph w={16} h={21} stroke="#fff">
          <path d="M5.500 14.500q0-2.500-2-4.500a6 6 0 1 1 9 0q-2 2-2 4.500zM5.500 17.500h5M6.500 19.500h3" />
        </Glyph>
        <TellInput placeholder="Tell me what you want to do" aria-label="Tell me what you want to do" />
      </TellMe>
      <ShareButton>
        <Glyph w={19} h={20} stroke="#fff" strokeWidth="1.500">
          <circle cx="9" cy="6" r="5" /><path d="M1 19q0-6 5.500-8M11.500 11l2 2M10 15h9M14.500 11v9" />
        </Glyph>
        Share
      </ShareButton>
    </TabBar>
  </>
);

const RibbonBar = () => (
  <Ribbon>
    <RibbonGroup title="Clipboard" w={187} launcher>
      <GroupBody $pad="3px 0 0 4px" $gap={4}>
        <PasteButton><PasteIcon />Paste<Caret /></PasteButton>
        <Stack>
          <Command $dim><CutIcon />Cut</Command>
          <Command $dim><CopyIcon />Copy</Command>
          <Command><PainterIcon />Format Painter</Command>
        </Stack>
      </GroupBody>
    </RibbonGroup>

    <RibbonGroup title="Font" w={314} launcher>
      <GroupBody $pad="13px 0 0 4px" $rows $gap={9}>
        <ToolRow>
          <SelectBox $w={104}>
            <Select $w={88} aria-label="Font"><option>Times New Roman</option></Select>
            <SelectArrow><Caret w={6} /></SelectArrow>
          </SelectBox>
          <SelectBox $w={68}>
            <Select $w={60} aria-label="Font size"><option>12</option></Select>
            <SelectArrow><Caret w={6} /></SelectArrow>
          </SelectBox>
          <Tool aria-label="Grow font">
            <Glyph w={16} h={18}><GlyphText x={0} y={15} size={17}>A</GlyphText><path d="M9 3h6l-3-3z" fill="#3b78b8" /></Glyph>
          </Tool>
          <Tool aria-label="Shrink font">
            <Glyph w={16} h={18}><GlyphText x={0} y={15} size={15}>A</GlyphText><path d="M9 1h6l-3 3z" fill="#3b78b8" /></Glyph>
          </Tool>
          <Sep />
          <Tool $w={38} aria-label="Change case">
            <Glyph w={20} h={18}><GlyphText x={0} y={14} size={15}>Aa</GlyphText></Glyph><Caret />
          </Tool>
          <Sep />
          <Tool $w={30} aria-label="Clear formatting"><EraserIcon /></Tool>
        </ToolRow>
        <ToolRow>
          <Tool $w={24} aria-label="Bold"><Glyph w={12} h={18}><GlyphText x={1} y={15} size={16} fontWeight="700">B</GlyphText></Glyph></Tool>
          <Tool $w={28} aria-label="Italic"><Glyph w={10} h={18}><text x="1" y="15" fontSize="18" fontStyle="italic" fontWeight="700" fontFamily="Liberation Serif" fill="#555">I</text></Glyph></Tool>
          <Tool $w={24} aria-label="Underline"><Glyph w={14} h={18}><GlyphText x={1} y={14} size={15} fontWeight="600">U</GlyphText><path d="M1 17.500h12" stroke="#555" /></Glyph></Tool>
          <Tool $w={16} aria-label="Underline style"><Caret /></Tool>
          <Tool $w={24} aria-label="Strikethrough"><Glyph w={20} h={14}><GlyphText x={0} y={11} size={11} fontWeight="600">abc</GlyphText><path d="M0 8.500h20" stroke="#555" /></Glyph></Tool>
          <Tool $w={28} aria-label="Subscript"><Glyph w={16} h={20}><GlyphText x={0} y={14} size={15} fontWeight="700">x</GlyphText><GlyphText x={10} y={18} size={9} color="#3b78b8" fontWeight="600">2</GlyphText></Glyph></Tool>
          <Tool $w={25} aria-label="Superscript"><Glyph w={16} h={20}><GlyphText x={0} y={16} size={15} fontWeight="700">x</GlyphText><GlyphText x={10} y={8} size={9} color="#3b78b8" fontWeight="600">2</GlyphText></Glyph></Tool>
          <Sep />
          <Tool $w={38} aria-label="Text effects"><TextEffectIcon /><Caret /></Tool>
          <Tool $w={38} aria-label="Highlight colour"><HighlightIcon /><Caret /></Tool>
          <Tool $w={38} aria-label="Font colour"><FontColorIcon /><Caret /></Tool>
        </ToolRow>
      </GroupBody>
    </RibbonGroup>

    <RibbonGroup title="Paragraph" w={316} launcher>
      <GroupBody $pad="13px 0 0 4px" $rows $gap={9}>
        <ToolRow>
          <Tool $w={38} aria-label="Bullets"><BulletsIcon /><Caret /></Tool>
          <Tool $w={40} aria-label="Numbering"><NumberingIcon /><Caret /></Tool>
          <Tool $w={38} aria-label="Multilevel list"><MultiLevel /><Caret /></Tool>
          <Sep />
          <Tool aria-label="Decrease indent"><IndentIcon out /></Tool>
          <Tool aria-label="Increase indent"><IndentIcon /></Tool>
          <Sep />
          <Tool $on aria-label="Left-to-right"><DirectionIcon /></Tool>
          <Tool aria-label="Right-to-left"><DirectionIcon rtl /></Tool>
          <Sep />
          <Tool aria-label="Sort"><SortIcon /></Tool>
          <Sep />
          <Tool aria-label="Show marks"><PilcrowIcon /></Tool>
        </ToolRow>
        <ToolRow>
          <Tool aria-label="Align left"><Lines w={14} rows={[[0, 14], [0, 10], [0, 14], [0, 10]]} /></Tool>
          <Tool aria-label="Centre"><Lines w={16} rows={[[0, 16], [3, 13], [0, 16], [3, 13]]} /></Tool>
          <Tool aria-label="Align right"><Lines w={14} rows={[[0, 14], [4, 14], [0, 14], [4, 14]]} /></Tool>
          <Tool $w={38} aria-label="Justify"><Lines w={17} rows={[[0, 17], [0, 17], [0, 17], [0, 17], [0, 17]]} /><Caret /></Tool>
          <Sep />
          <Tool $w={38} aria-label="Line spacing"><SpacingIcon /><Caret /></Tool>
          <Sep />
          <Tool $w={38} aria-label="Shading"><ShadingIcon /><Caret /></Tool>
          <Tool $w={40} aria-label="Borders"><BordersIcon /><Caret /></Tool>
        </ToolRow>
      </GroupBody>
    </RibbonGroup>

    <RibbonGroup title="Styles" launcher>
      <GroupBody $pad="6px 7px 0 5px">
        <Gallery>
          <StyleList>
            {styleItems.map(s => (
              <StyleItem key={s.name} $on={s.on}>
                <Preview $look={s.look}>{s.sample}</Preview>
                <StyleName>{s.name}</StyleName>
              </StyleItem>
            ))}
          </StyleList>
          <GalleryScroll>
            <GalleryButton $off aria-label="Row up"><Glyph w={6} h={4}><path d="M0 4h6L3 0z" fill="#c6c6c6" /></Glyph></GalleryButton>
            <GalleryButton aria-label="Row down"><Caret w={6} /></GalleryButton>
            <GalleryButton aria-label="More styles"><Glyph w={9} h={9}><path d="M0 .5h9M0 3.500h9" stroke="#666" /><path d="M1 5h7L4.500 9z" fill="#666" /></Glyph></GalleryButton>
          </GalleryScroll>
        </Gallery>
      </GroupBody>
    </RibbonGroup>

    <RibbonGroup title="Editing" w={94}>
      <GroupBody $pad="3px 0 0 7px" $rows>
        <Command $h={27}><Magnifier size={19} />Find<CommandGap /><Caret /></Command>
        <Command $h={27}><ReplaceIcon />Replace</Command>
        <Command $h={27}><SelectIcon />Select<Caret /></Command>
      </GroupBody>
    </RibbonGroup>

    <RibbonEnd>
      <button aria-label="Collapse the ribbon">
        <Glyph w={11} h={8}><path d="M1 6.500l4.500-4.500L10 6.500" stroke="#666" strokeWidth="2" /></Glyph>
      </button>
    </RibbonEnd>
  </Ribbon>
);

const NavigationPane = () => (
  <Pane $w={286} $pad="11px 15px 0 15px">
    <PaneHead>
      <PaneTitle>Navigation</PaneTitle>
      <PaneButton aria-label="Pane options"><Caret w={11} /></PaneButton>
      <PaneButton $ml={28} aria-label="Close navigation"><CloseIcon /></PaneButton>
    </PaneHead>
    <SearchBox>
      <SearchInput placeholder="Search document" aria-label="Search document" />
      <Magnifier size={15} color="#2b579a" />
      <Caret w={6} />
    </SearchBox>
    <NavTabs>
      <NavTab $on>Headings</NavTab>
      <NavTab>Pages</NavTab>
      <NavTab>Results</NavTab>
    </NavTabs>
    <Tree>
      {headings.map((h, i) => (
        <TreeItem key={i} $level={h.level}>
          <Twisty>{h.open && <Glyph w={10} h={10}><path d="M9 0v9H0z" fill="#444" /></Glyph>}</Twisty>
          <TreeLink $on={h.on}>{h.text}</TreeLink>
        </TreeItem>
      ))}
    </Tree>
  </Pane>
);

const DocumentArea = () => (
  <Canvas>
    <TabSelector aria-label="Tab type"><Glyph w={8} h={9}><path d="M1 1v7h7" stroke="#555" strokeWidth="2" /></Glyph></TabSelector>
    <RulerRow><HorizontalRuler /></RulerRow>
    <SideRuler><VerticalRuler /></SideRuler>
    <PageScroll>
      <Page>
        <Paragraph>экспериментальных термограмм используются данные по ТКЛР исследуемого материала.</Paragraph>
        <Figure>
          <Apparatus />
          <Caption>
            Рис. 3.2. LFA 457 <em>MicroFlash</em>: 1 – печь; 2 - рабочий объем; 3 – поворотный диск;<br />
            4 – контейнер с образцом; 5 – лазер; 6 - ИК - детектор
          </Caption>
        </Figure>
      </Page>
    </PageScroll>
    <ScrollBar>
      <ScrollButton aria-label="Scroll up"><Glyph w={10} h={6}><path d="M0 6h10L5 0z" fill="#666" /></Glyph></ScrollButton>
      <ScrollTrack><ScrollThumb /></ScrollTrack>
      <ScrollButton aria-label="Scroll down"><Glyph w={10} h={6}><path d="M0 0h10L5 6z" fill="#666" /></Glyph></ScrollButton>
    </ScrollBar>
  </Canvas>
);

const EffectsPane = () => (
  <Pane $w={355} $pad="11px 15px 0 14px">
    <PaneHead>
      <PaneTitle $size={25}>Format Text Effects</PaneTitle>
      <PaneButton aria-label="Pane options"><Caret w={11} /></PaneButton>
      <PaneButton $ml={28} aria-label="Close pane"><CloseIcon /></PaneButton>
    </PaneHead>
    <EffectTabs>
      <button aria-label="Text fill and outline">
        <Glyph w={30} h={30}>
          <GlyphText x={7} y={19} size={25} color="#777" fontWeight="600">A</GlyphText>
          <rect x=".5" y="22.500" width="28" height="6" fill="#fff" stroke="#777" />
        </Glyph>
      </button>
      <button aria-label="Text effects">
        <Glyph w={22} h={30}>
          <GlyphText x={2} y={20} size={25} color="#dce8f6" stroke="#2b579a" fontWeight="600">A</GlyphText>
          <path d="M3 21l-1 4 1 3M7 28v-3l2-2h4l2 2v3M19 21l1 4-1 3" stroke="#9db9dd" />
        </Glyph>
      </button>
    </EffectTabs>
    <EffectRule><Glyph w={17} h={11}><path d="M0 10.500L8.500 1 17 10.500" stroke="#c6c6c6" /></Glyph></EffectRule>
    {['Shadow', 'Reflection', 'Glow', 'Soft Edges', '3-D Format'].map(s => (
      <Section key={s}>
        <Glyph w={7} h={12}><path d="M1 1v10l5-5z" fill="#fff" stroke="#888" /></Glyph>
        {s}
      </Section>
    ))}
  </Pane>
);

const Status = () => (
  <StatusBar>
    <StatusItem $mr={20}>Page 37 of 51</StatusItem>
    <StatusItem $mr={19}>7858 words</StatusItem>
    <StatusItem $mr={18} aria-label="Proofing errors">
      <Glyph w={18} h={15} stroke="#777">
        <path d="M9 2.500L7.500 1H.5v11h7L9 13.500V2.500L10.500 1h7v2M10.500 12.500h7M9 13v2M12 5l5 5M17 5l-5 5" />
      </Glyph>
    </StatusItem>
    <StatusItem>Russian</StatusItem>
    <Spacer />
    <ViewButton aria-label="Read mode">
      <Glyph w={18} h={15} stroke="#666"><path d="M.5 .5h7L9 2l1.500-1.500h7v12h-7L9 14l-1.500-1.500h-7zM9 2v12M3 3.500h4M3 6.500h4M3 9.500h4M11 3.500h4M11 6.500h4M11 9.500h4" /></Glyph>
    </ViewButton>
    <ViewButton $on aria-label="Print layout">
      <Glyph w={17} h={16} stroke="#666"><path d="M.5 .5h16v15H.5zM3 3.500h11M3 6.500h11M3 9.500h11M3 12.500h11" /></Glyph>
    </ViewButton>
    <ViewButton aria-label="Web layout">
      <Glyph w={18} h={16} stroke="#666">
        <path d="M8 13.500H.5V.5h13V6M3 3.500h8M3 6.500h6M3 9.500h5" /><circle cx="13" cy="11" r="4.500" fill="#888" /><path d="M11 9l3 1-1 4" stroke="#f3f3f3" />
      </Glyph>
    </ViewButton>
    <button aria-label="Zoom out"><Glyph w={15} h={10}><path d="M5 5h10" stroke="#666" strokeWidth="2" /></Glyph></button>
    <ZoomRange type="range" min="0" max="100" defaultValue="50" aria-label="Zoom" />
    <button aria-label="Zoom in"><Glyph w={10} h={10}><path d="M0 5h10M5 0v10" stroke="#666" strokeWidth="2" /></Glyph></button>
    <ZoomValue>100%</ZoomValue>
  </StatusBar>
);

const Taskbar = () => (
  <TaskBar>
    <TaskButton $w={60} aria-label="Start">
      <Glyph w={20} h={20}><path d="M0 3l8-1v7.500H0zM9 2l11-2v9.500H9zM0 10.500h8V18l-8-1zM9 10.500h11V20L9 18z" fill="#fff" /></Glyph>
    </TaskButton>
    <TaskSearch>
      <Glyph w={28} h={28}><circle cx="14" cy="14" r="11.500" stroke="#000" strokeWidth="3.500" /></Glyph>
      <TaskInput placeholder="Type here to search" aria-label="Type here to search" />
      <Glyph w={16} h={22} stroke="#222" strokeWidth="1.500"><rect x="5" y="1" width="6" height="13" rx="2" /><path d="M1.500 10v4q0 3 3 3h7q3 0 3-3v-4M8 17v3M5 20.500h6" /></Glyph>
    </TaskSearch>
    <TaskButton aria-label="Task view">
      <Glyph w={25} h={18} stroke="#fff"><path d="M4.500 .5h16v17h-16zM3 3.500H.5v11H3M22 3.500h2.500v11H22" /></Glyph>
    </TaskButton>
    <TaskButton $w={63} aria-label="Edge">
      <Glyph w={24} h={28}>
        <path d="M0 13Q2 0 12.500 0 24 1 24 12v4H8q1 7 8 7 4 0 6.500-1.500V26Q19 28 15 28 4 27 4 17q0-6 6-9-2 2-2 4h8.500q0-5-5.500-5Q3 7 0 13z" fill="#0a7ad9" />
      </Glyph>
    </TaskButton>
    <TaskButton $open aria-label="File Explorer">
      <Glyph w={28} h={24}>
        <path d="M0 0h12l2 2h14v20H0z" fill="#ffe08a" /><path d="M0 0h11v4H0z" fill="#f5bf2e" /><path d="M5 24V15q0-2 2-2h14q2 0 2 2v9h-5v-6h-8v6z" fill="#35aee0" />
      </Glyph>
    </TaskButton>
    <TaskButton aria-label="Store">
      <Glyph w={30} h={28}>
        <path d="M10 9V4q0-3 5-3t5 3v5" stroke="#fff" strokeWidth="1.500" /><path d="M0 8h30l-1 20H1z" fill="#fff" />
        <path d="M8 12h6v6H8z" fill="#f25022" /><path d="M15 12h6v6h-6z" fill="#7fba00" /><path d="M8 19h6v6H8z" fill="#00a4ef" /><path d="M15 19h6v6h-6z" fill="#ffb900" />
      </Glyph>
    </TaskButton>
    <TaskButton aria-label="Mail">
      <Glyph w={30} h={24}><path d="M0 7L15 0l15 7v17H0z" fill="#fff" /><path d="M2 7h26l-11 6 7 7-10-6z" fill="#000" /></Glyph>
    </TaskButton>
    <TaskButton aria-label="Snipping Tool">
      <Glyph w={28} h={28}>
        <ellipse cx="10" cy="14" rx="10" ry="6" fill="#8a8a8a" />
        <ellipse cx="14" cy="8" rx="11" ry="7" transform="rotate(-25 14 8)" fill="#f5f5f5" stroke="#d33" />
        <path d="M8 9l10 8M17 4l-2 14" stroke="#777" strokeWidth="1.500" />
        <path d="M16 16q-4 4 0 10 3-2 1-9M17 16q5-1 9 4-4 3-9-4" stroke="#2a86c8" strokeWidth="2" />
      </Glyph>
    </TaskButton>
    <TaskButton $open aria-label="WhatsApp">
      <Glyph w={31} h={30}>
        <path d="M1 27l2-7a13 13 0 1 1 5 5z" fill="#fff" /><path d="M3.500 25l1.500-5a11 11 0 1 1 4 3.500z" fill="#2bb741" />
        <path d="M9 7q2-2 3 0l1 3-1 2q2 4 5 5" stroke="#fff" strokeWidth="2.500" />
        <circle cx="21" cy="20" r="10" fill="#f00" /><path d="M21 14v8M21 24v2" stroke="#fff" strokeWidth="2" />
      </Glyph>
    </TaskButton>
    <TaskButton $open $on aria-label="Word">
      <Glyph w={28} h={26}>
        <path d="M14 3h13v20H14z" fill="#fff" stroke="#2b579a" /><path d="M16 7h9M16 10h9M16 13h9M16 16h9M16 19h9" stroke="#2b579a" strokeWidth="1.500" />
        <path d="M0 3l16-3v26L0 23z" fill="#2b579a" /><GlyphText x={2} y={18} size={13} color="#fff" fontWeight="700">W</GlyphText>
      </Glyph>
    </TaskButton>
    <Tray>
      <TrayButton $w={60} aria-label="People">
        <Glyph w={20} h={20} stroke="#fff" strokeWidth="1.500"><circle cx="13.500" cy="4.500" r="3.500" /><circle cx="6" cy="9.500" r="3" /><path d="M1 19q0-6 5-6t5 6M10 10q3-2 6-1 2 1 2.500 5" /></Glyph>
      </TrayButton>
      <TrayButton aria-label="Hidden icons"><Glyph w={16} h={10}><path d="M1 9l7-8 7 8" stroke="#fff" strokeWidth="1.500" /></Glyph></TrayButton>
      <TrayButton aria-label="OneDrive"><Glyph w={21} h={14}><path d="M4 11H2q-2-1-2-3t3-3Q4 0 8 0q4 0 5 3-5 0-6 4-3 1-3 4z" fill="#fff" /><path d="M6 14q-1-4 3-5 1-5 6-4 2 1 2 3 4 0 4 3 0 3-3 3z" fill="#fff" /></Glyph></TrayButton>
      <TrayButton aria-label="Battery"><Glyph w={21} h={16} stroke="#fff"><path d="M4.500 8v5.500h13v-10H8M18 6.500h1.500v4H18M1 2.500h5v3H1zM2 0v2M5 0v2M3.500 5v4" /><path d="M7 5.500h9v6H7z" fill="#fff" /></Glyph></TrayButton>
      <TrayButton aria-label="Network"><Glyph w={17} h={20} stroke="#888"><path d="M4 18Q4 6 16 5M8 18q0-7 8-8M12 18q0-4 4-4" /><path d="M3 0v6M0 1.500l6 3M6 1.500l-6 3" stroke="#fff" /></Glyph></TrayButton>
      <TrayButton aria-label="Volume"><Glyph w={21} h={18} stroke="#fff"><path d="M.5 6.500h3l5-5v15l-5-5h-3zM11 6q2 3 0 6M14 4q3.500 5 0 10M17 2q5 7 0 14" /></Glyph></TrayButton>
      <TrayButton $w={50} aria-label="Ink workspace"><Glyph w={21} h={20} stroke="#fff" strokeWidth="1.500"><path d="M6 14L14 1q3-1 3 2L9 17l-3 1zM6 11q-6 1-5 5t5 2M13 11q5-4 6-1-1 3-5 3" /></Glyph></TrayButton>
      <TrayButton $w={50} aria-label="Touch keyboard"><Glyph w={30} h={17} stroke="#fff"><path d="M.5 .5h29v16H.5z" /><path d="M4 4.500h22M4 8.500h22" strokeDasharray="2 1" /><path d="M4 12.500h3M9 12.500h12M23 12.500h3" /></Glyph></TrayButton>
      <TrayButton $w={50} aria-label="Touchpad"><Glyph w={20} h={17} stroke="#fff"><path d="M.5 .5h19v16H.5zM.5 11.500h19M9.500 11.500v5" /></Glyph></TrayButton>
      <TrayButton $w={45}>РУС</TrayButton>
      <Clock>4:01 PM<br />4/9/2018</Clock>
      <TrayButton $w={50} aria-label="Notifications"><Glyph w={21} h={20} stroke="#fff" strokeWidth="1.500"><path d="M1 1h19v15h-7l-2.500 2.500L8 16H1z" /></Glyph></TrayButton>
      <ShowDesktop aria-label="Show desktop" />
    </Tray>
  </TaskBar>
);

const App = () => (
  <Window>
    <GlobalStyle />
    <Header />
    <RibbonBar />
    <Workspace>
      <NavigationPane />
      <DocumentArea />
      <EffectsPane />
    </Workspace>
    <Status />
    <Taskbar />
  </Window>
);

export default App;
